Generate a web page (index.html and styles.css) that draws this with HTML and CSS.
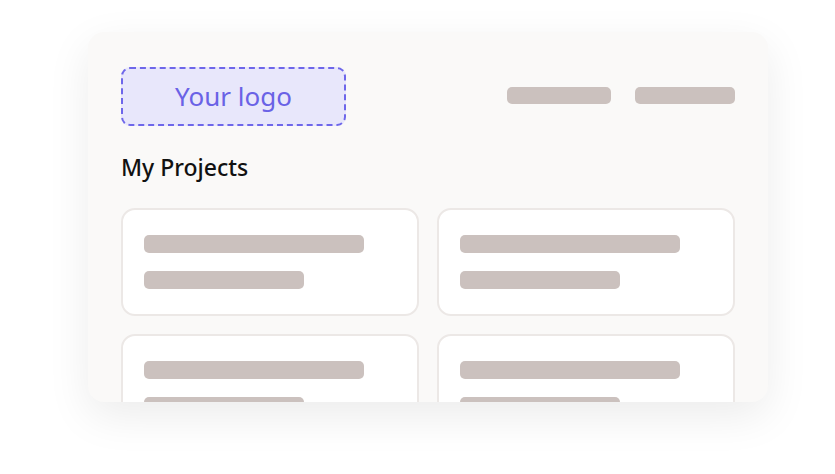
FILE: index.html
```html
<!DOCTYPE html>
<html lang="en">

<head>
    <meta charset="utf-8">
    <meta name="viewport" content="width=device-width, initial-scale=1.0">
    <title>My Projects</title>

    <link rel="stylesheet" href="styles.css">
</head>

<body>

    <main class="frame">
        <header class="topbar">
            <div class="logo">Your logo</div>
            <nav class="nav">
                <span class="bar navLink"></span>
                <span class="bar navLink small"></span>
            </nav>
        </header>

        <h1 class="title">My Projects</h1>

        <section class="projects">
            <article class="project">
                <span class="bar long"></span>
                <span class="bar short"></span>
            </article>
            <article class="project">
                <span class="bar long"></span>
                <span class="bar short"></span>
            </article>
            <article class="project">
                <span class="bar long"></span>
                <span class="bar short"></span>
            </article>
            <article class="project">
                <span class="bar long"></span>
                <span class="bar short"></span>
            </article>
        </section>
    </main>

</body>

</html>
```

FILE: styles.css
```css
html {
    background: #ffffff;
}

body {
    margin: 0;
    min-height: 474px;
    box-sizing: border-box;
    padding: 32px 0 0 88px;
    font-family: "Noto Sans", "Open Sans", sans-serif;
}

.frame {
    width: 680px;
    height: 370px;
    box-sizing: border-box;
    padding: 35px 32px 0 33px;
    background-color: #faf9f8;
    border-radius: 16px;
    box-shadow: 0 14px 44px rgba(0, 0, 0, 0.08);
    overflow: hidden;
}

.topbar {
    display: flex;
    justify-content: space-between;
    align-items: center;
}

.logo {
    width: 225px;
    height: 59px;
    box-sizing: border-box;
    display: flex;
    align-items: center;
    justify-content: center;
    border: 2px dashed #6e67ea;
    border-radius: 9px;
    background-color: #e8e7fb;
    color: #6a62e6;
    font-size: 26px;
    padding-bottom: 2px;
}

.nav {
    display: flex;
    gap: 24px;
    padding-right: 1px;
    margin-top: -2px;
}

.bar {
    display: block;
    height: 18px;
    border-radius: 5px;
    background-color: #cbc1be;
}

.navLink {
    width: 104px;
    height: 17px;
}

.navLink.small {
    width: 100px;
}

.title {
    margin: 26px 0 26px;
    font-size: 23px;
    font-weight: 500;
    color: #111111;
    line-height: 30px;
}

.projects {
    display: grid;
    grid-template-columns: 298px 298px;
    gap: 18px;
}

.project {
    height: 108px;
    box-sizing: border-box;
    padding: 25px 21px 0;
    background: #ffffff;
    border: 2px solid #ece8e6;
    border-radius: 14px;
}

.project .long {
    width: 220px;
    margin-bottom: 18px;
}

.project .short {
    width: 160px;
}
```
